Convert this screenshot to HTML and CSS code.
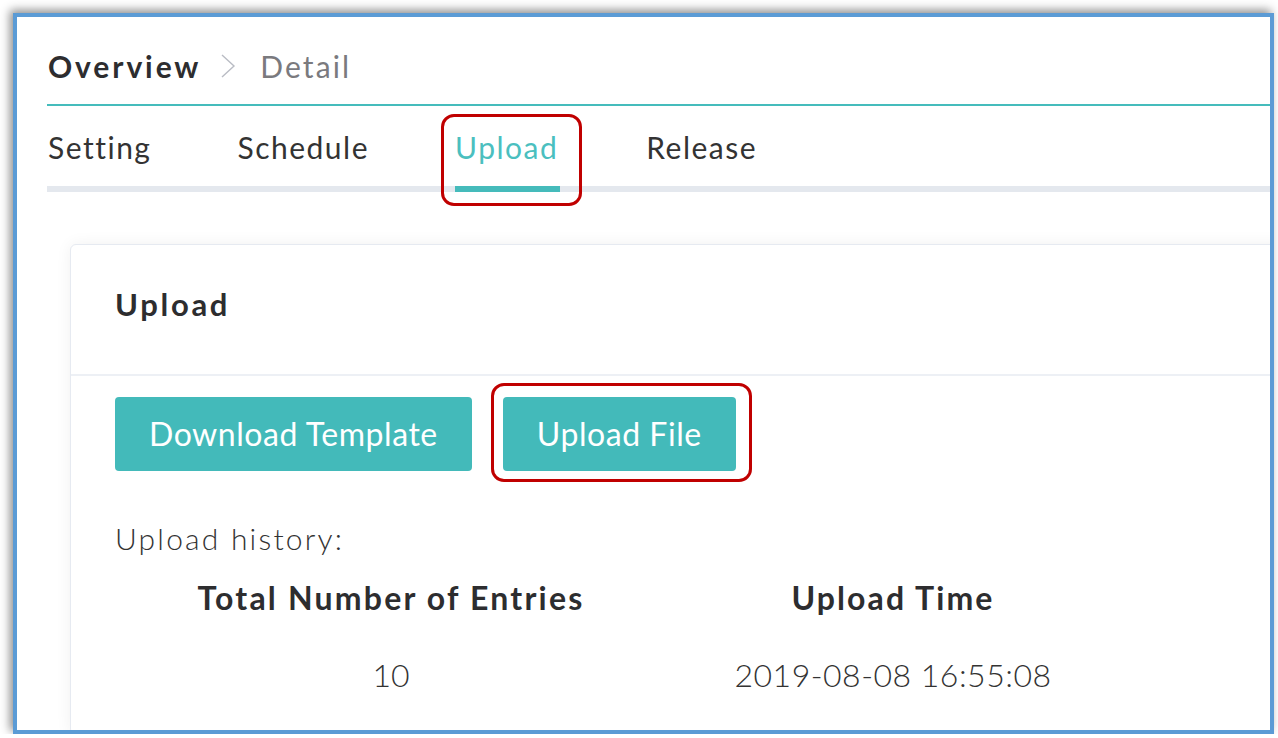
FILE: index.html
```html
<!DOCTYPE html>
<html lang="en">
<head>
<meta charset="utf-8">
<title>Upload</title>
<link rel="stylesheet" href="styles.css">
</head>
<body>
<div class="frame">
  <div class="breadcrumb">
    <span class="crumb-main">Overview</span>
    <svg class="chev" width="16" height="26" viewBox="0 0 16 26"><polyline points="2,2 14,13 2,24" fill="none" stroke="#b9bcc4" stroke-width="1.4"/></svg>
    <span class="crumb-sub">Detail</span>
  </div>
  <ul class="tabs">
    <li class="tab">Setting</li>
    <li class="tab">Schedule</li>
    <li class="tab active">Upload<span class="mark mark-tab"></span></li>
    <li class="tab">Release</li>
  </ul>
  <section class="card">
    <div class="card-head">Upload</div>
    <div class="card-body">
      <div class="actions">
        <button class="btn">Download Template</button>
        <button class="btn btn-upload">Upload File<span class="mark mark-btn"></span></button>
      </div>
      <div class="history">Upload history:</div>
      <div class="table">
        <div class="th th-total">Total Number of Entries</div>
        <div class="th th-time">Upload Time</div>
        <div class="td">10</div>
        <div class="td td-time">2019-08-08 16:55:08</div>
      </div>
    </div>
  </section>
</div>
</body>
</html>
```
FILE: styles.css
```css
html, body {
  margin: 0;
  padding: 0;
  background: #ffffff;
  overflow: hidden;
}
body {
  font-family: Lato, "Noto Sans", sans-serif;
  color: #333;
}
.frame {
  box-sizing: border-box;
  width: 1261px;
  height: 721px;
  margin: 13px 0 0 13px;
  border: 4px solid #5b9bd5;
  box-shadow: -3px -3px 9px rgba(0, 0, 0, 0.45);
  overflow: hidden;
  padding-left: 30px;
  background: #fff;
}
.breadcrumb {
  display: flex;
  align-items: center;
  padding: 31px 0 20px;
  border-bottom: 2px solid #45bcbc;
  font-size: 30px;
  line-height: 36px;
}
.crumb-main {
  font-weight: 700;
  color: #2d2d2f;
  padding-left: 1px;
  letter-spacing: 2.9px;
}
.chev {
  margin: 0 24px 0 19px;
  display: block;
}
.crumb-sub {
  color: #7a7a7e;
  letter-spacing: 2.1px;
}
.tabs {
  list-style: none;
  margin: 0;
  padding: 23px 0 0;
  display: flex;
  gap: 86px;
  border-bottom: 6px solid #e4e8ee;
}
.tab {
  position: relative;
  font-size: 30px;
  line-height: 36px;
  padding: 0 0 21px;
  margin-bottom: -6px;
  border-bottom: 6px solid transparent;
  color: #333;
  letter-spacing: 1.5px;
}
.tab:first-child {
  padding-left: 1px;
}
.tab.active {
  color: #4bbfbf;
  border-bottom-color: #45bbbb;
  padding-right: 2px;
}
.mark {
  position: absolute;
  border: 3px solid #c00000;
  border-radius: 13px;
  pointer-events: none;
}
.mark-tab {
  left: -14px;
  right: -22px;
  top: -15px;
  bottom: -20px;
}
.card {
  margin: 52px -80px 0 23px;
  border: 1px solid #e6eaf1;
  border-radius: 6px;
  box-shadow: 0 0 16px rgba(0, 0, 0, 0.06);
  background: #fff;
}
.card-head {
  padding: 41px 44px 52px;
  font-size: 31px;
  line-height: 36px;
  font-weight: 700;
  color: #2d2d2f;
  letter-spacing: 2.7px;
  border-bottom: 2px solid #edf0f5;
}
.card-body {
  padding: 21px 44px 40px;
}
.actions {
  display: flex;
  gap: 31px;
}
.btn {
  position: relative;
  font-family: Lato, "Noto Sans", sans-serif;
  font-size: 32px;
  line-height: 74px;
  height: 74px;
  padding: 0 34px;
  border: 0;
  border-radius: 4px;
  background: #43baba;
  color: #fff;
  letter-spacing: 0.55px;
}
.mark-btn {
  left: -12px;
  right: -16px;
  top: -14px;
  bottom: -11px;
}
.history {
  margin-top: 49px;
  font-size: 30px;
  line-height: 36px;
  font-weight: 300;
  color: #333;
  letter-spacing: 2.2px;
}
.table {
  display: grid;
  grid-template-columns: 552px 452px;
  margin-top: 23px;
  row-gap: 39px;
  text-align: center;
}
.th {
  font-size: 32px;
  line-height: 38px;
  font-weight: 700;
  color: #2d2d2f;
}
.th-total {
  letter-spacing: 2.2px;
}
.th-time {
  letter-spacing: 2.1px;
}
.td {
  font-size: 32px;
  line-height: 38px;
  font-weight: 300;
  color: #333;
}
.td-time {
  letter-spacing: 0.5px;
}
```
